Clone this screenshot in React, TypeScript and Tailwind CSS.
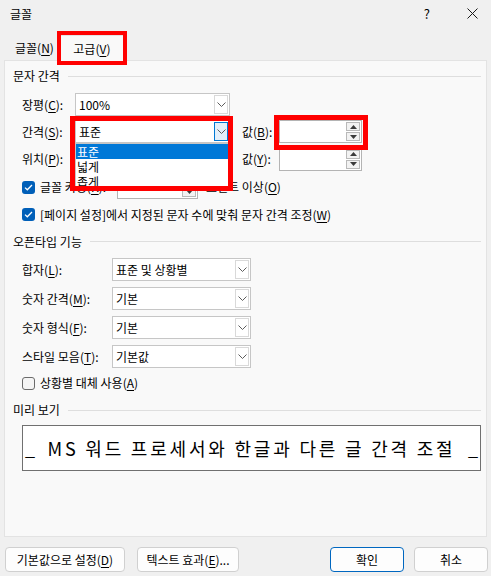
import React from "react";

const U = ({ c }: { c: string }) => (
  <span className="underline underline-offset-[2px] decoration-[1px]">{c}</span>
);

function Chevron() {
  return (
    <svg width="9" height="5" viewBox="0 0 9 5" fill="none">
      <path d="M0.5 0.5 L4.5 4.5 L8.5 0.5" stroke="#5c5c5c" strokeWidth="1" />
    </svg>
  );
}

function Combo({ w, text, active }: { w: string; text?: string; active?: boolean }) {
  return (
    <div className={`flex h-[23px] ${w} border border-[#c6c6c6] bg-white`}>
      <div className="flex flex-1 items-center pl-[3px]">{text}</div>
      <div
        className={
          active
            ? "m-[1px] flex w-[14px] items-center justify-center border border-[#0078d4] bg-[#e3effa]"
            : "m-[1px] flex w-[14px] items-center justify-center border border-[#d9d9d9] bg-white"
        }
      >
        <Chevron />
      </div>
    </div>
  );
}

function Spin({ w }: { w: string }) {
  return (
    <div className={`flex h-[23px] ${w} border border-[#b4b4b4] bg-white`}>
      <div className="flex-1" />
      <div className="m-[1px] flex w-[14px] flex-col gap-[1px]">
        <div className="flex flex-1 items-center justify-center border border-[#b9b9b9] bg-[#f2f2f2]">
          <svg width="7" height="4" viewBox="0 0 7 4">
            <path d="M0 4 L3.5 0 L7 4 Z" fill="#3a3a3a" />
          </svg>
        </div>
        <div className="flex flex-1 items-center justify-center border border-[#b9b9b9] bg-[#f2f2f2]">
          <svg width="7" height="4" viewBox="0 0 7 4">
            <path d="M0 0 L3.5 4 L7 0 Z" fill="#3a3a3a" />
          </svg>
        </div>
      </div>
    </div>
  );
}

function Check({ on }: { on?: boolean }) {
  return on ? (
    <div className="flex h-[13px] w-[13px] items-center justify-center rounded-[3px] bg-[#005fb8]">
      <svg width="9" height="7" viewBox="0 0 9 7" fill="none">
        <path d="M1 3.6 L3.3 5.8 L8 1" stroke="white" strokeWidth="1.3" />
      </svg>
    </div>
  ) : (
    <div className="h-[13px] w-[13px] rounded-[3px] border border-[#6b6b6b] bg-[#f5f5f5]" />
  );
}

function Group({ title, h }: { title: string; h: string }) {
  return (
    <div className={`flex ${h} items-center gap-[8px] pl-[8px] pr-[5px]`}>
      <span>{title}</span>
      <div className="h-px flex-1 bg-[#dedede]" />
    </div>
  );
}

export default function App() {
  return (
    <div className="relative h-[576px] w-[491px] overflow-hidden bg-[#f0f0f0] font-['Noto_Sans_CJK_KR','Noto_Sans',sans-serif] text-[12px] leading-[16px] text-black">
      {/* title bar */}
      <div className="flex h-[27px] items-center pl-[10px]">
        <span>글꼴</span>
        <span className="ml-auto mr-[37px] text-[13px]">?</span>
        <svg className="mr-[13px]" width="11" height="11" viewBox="0 0 11 11">
          <path d="M0.5 0.5 L10.5 10.5 M10.5 0.5 L0.5 10.5" stroke="#1a1a1a" strokeWidth="1" />
        </svg>
      </div>

      {/* tabs */}
      <div className="flex h-[33px] items-end pl-[9px]">
        <div className="flex h-[24px] items-center px-[6px]">
          글꼴(<U c="N" />)
        </div>
        <div className="relative z-10 -mb-px flex h-[26px] w-[64px] items-center justify-center border border-b-0 border-[#e3e3e3] bg-[#f9f9f9]">
          고급(<U c="V" />)
          <div className="absolute -bottom-[4px] -left-[4px] -right-[4px] -top-[5px] border-[4px] border-[#ff0000]" />
        </div>
      </div>

      {/* panel */}
      <div className="mx-[4px] h-[477px] border border-[#e3e3e3] bg-[#f9f9f9]">
        <Group title="문자 간격" h="h-[30px]" />

        <div className="flex h-[27px] items-center pl-[17px]">
          <span className="w-[53px]">
            장평(<U c="C" />):
          </span>
          <Combo w="w-[155px]" text="100%" />
        </div>

        <div className="flex h-[27px] items-center pl-[17px]">
          <span className="w-[53px]">
            간격(<U c="S" />):
          </span>
          <Combo w="w-[155px]" text="표준" active />
          <span className="ml-[12px] w-[37px]">
            값(<U c="B" />):
          </span>
          <Spin w="w-[83px]" />
        </div>

        <div className="flex h-[28px] items-center pl-[17px]">
          <span className="w-[53px]">
            위치(<U c="P" />):
          </span>
          <Combo w="w-[155px]" text="표준" />
          <span className="ml-[12px] w-[37px]">
            값(<U c="Y" />):
          </span>
          <Spin w="w-[83px]" />
        </div>

        <div className="flex h-[28px] items-center pl-[17px]">
          <Check on />
          <span className="ml-[5px] w-[77px]">
            글꼴 커닝(<U c="K" />):
          </span>
          <Spin w="w-[81px]" />
          <span className="ml-[8px]">
            포인트 이상(<U c="O" />)
          </span>
        </div>

        <div className="flex h-[27px] items-center pl-[17px]">
          <Check on />
          <span className="ml-[5px]">
            [페이지 설정]에서 지정된 문자 수에 맞춰 문자 간격 조정(<U c="W" />)
          </span>
        </div>

        <Group title="오픈타입 기능" h="h-[27px]" />

        {[
          ["합자(", "L", "):", "표준 및 상황별"],
          ["숫자 간격(", "M", "):", "기본"],
          ["숫자 형식(", "F", "):", "기본"],
          ["스타일 모음(", "T", "):", "기본값"],
        ].map(([a, k, b, v]) => (
          <div key={k} className="flex h-[29px] items-center pl-[17px]">
            <span className="w-[90px]">
              {a}
              <U c={k} />
              {b}
            </span>
            <Combo w="w-[139px]" text={v} />
          </div>
        ))}

        <div className="flex h-[24px] items-center pl-[17px]">
          <Check />
          <span className="ml-[5px]">
            상황별 대체 사용(<U c="A" />)
          </span>
        </div>

        <Group title="미리 보기" h="h-[30px]" />

        <div className="ml-[17px] mr-[5px] flex h-[46px] items-center border border-[#707070] bg-white px-[2px] text-[18px] leading-[22px]">
          <span>_</span>
          <span className="flex-1 text-center tracking-[2.8px]">MS 워드 프로세서와 한글과 다른 글 간격 조절</span>
          <span>_</span>
        </div>
      </div>

      {/* buttons */}
      <div className="mt-[10px] flex h-[25px] pl-[5px] pr-[3px]">
        <div className="flex w-[120px] items-center justify-center rounded-[4px] border border-[#d0d0d0] bg-[#fdfdfd]">
          기본값으로 설정(<U c="D" />)
        </div>
        <div className="ml-[12px] flex w-[102px] items-center justify-center rounded-[4px] border border-[#d0d0d0] bg-[#fdfdfd]">
          텍스트 효과(<U c="E" />)...
        </div>
        <div className="ml-auto flex w-[74px] items-center justify-center rounded-[4px] border border-[#0067c0] bg-[#fdfdfd]">
          확인
        </div>
        <div className="ml-[10px] flex w-[74px] items-center justify-center rounded-[4px] border border-[#d0d0d0] bg-[#fdfdfd]">
          취소
        </div>
      </div>

      {/* open dropdown list for 간격 */}
      <div className="absolute left-[75px] top-[143px] h-[48px] w-[155px] border border-[#c6c6c6] bg-white">
        <div className="flex h-[15px] items-center bg-[#0078d7] pl-[1px] text-white">표준</div>
        <div className="flex h-[15px] items-center pl-[1px]">넓게</div>
        <div className="flex h-[15px] items-center pl-[1px]">좁게</div>
      </div>

      {/* red highlight boxes */}
      <div className="absolute left-[70px] top-[116px] h-[75px] w-[163px] border-[5px] border-[#ff0000]" />
      <div className="absolute left-[274px] top-[115px] h-[35px] w-[94px] border-[5px] border-[#ff0000]" />
    </div>
  );
}
